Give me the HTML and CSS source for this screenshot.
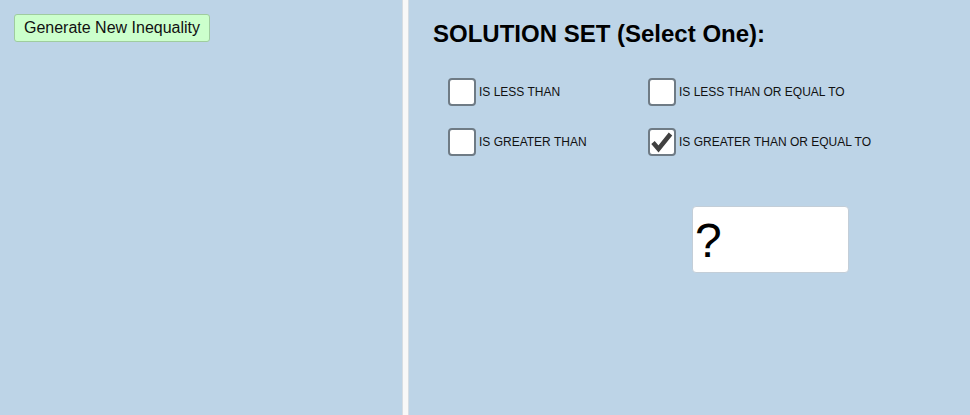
FILE: index.html
```html
<!DOCTYPE html>
<html>
<head>
<meta charset="utf-8">
<link rel="stylesheet" href="styles.css">
</head>
<body>
<div class="app">
  <div class="left">
    <button class="gen-btn">Generate New Inequality</button>
  </div>
  <div class="divider"></div>
  <div class="right">
    <h1 class="title">SOLUTION SET (Select One):</h1>
    <div class="options">
      <label class="opt"><span class="box"></span><span class="lbl">IS LESS THAN</span></label>
      <label class="opt"><span class="box"></span><span class="lbl">IS LESS THAN OR EQUAL TO</span></label>
      <label class="opt"><span class="box"></span><span class="lbl">IS GREATER THAN</span></label>
      <label class="opt"><span class="box checked"><svg width="24" height="24" viewBox="0 0 24 24"><polyline points="3,12.5 8.5,19 20.5,4" fill="none" stroke="#404040" stroke-width="4.5" stroke-linejoin="miter"/></svg></span><span class="lbl">IS GREATER THAN OR EQUAL TO</span></label>
    </div>
    <div class="answer">?</div>
  </div>
</div>
</body>
</html>
```
FILE: styles.css
```css
html, body {
  margin: 0;
  padding: 0;
  background: #bdd4e7;
  font-family: "Liberation Sans", Arial, sans-serif;
}
.app {
  display: flex;
  width: 970px;
  height: 415px;
}
.left {
  width: 402px;
  padding: 14px 0 0 14px;
  box-sizing: border-box;
}
.gen-btn {
  width: 196px;
  height: 28px;
  padding: 0;
  background: #ccffcc;
  border: 1px solid #9fcc9f;
  border-radius: 3px;
  font-family: "Liberation Sans", Arial, sans-serif;
  font-size: 16px;
  color: #111;
}
.divider {
  width: 5px;
  background: #f8f8f8;
  border-left: 1px solid #d6dde3;
  border-right: 1px solid #d6dde3;
}
.right {
  flex: 1;
  padding: 20px 0 0 24px;
}
.title {
  margin: 0;
  font-size: 24px;
  line-height: 28px;
  font-weight: bold;
  color: #000;
}
.options {
  margin: 30px 0 0 15px;
  display: grid;
  grid-template-columns: 200px 280px;
  row-gap: 22px;
}
.opt {
  display: flex;
  align-items: center;
  gap: 3px;
}
.box {
  width: 24px;
  height: 24px;
  background: #fff;
  border: 2px solid #6f7b85;
  border-radius: 4px;
  display: flex;
  align-items: center;
  justify-content: center;
}
.lbl {
  font-size: 12px;
  color: #111;
  white-space: nowrap;
}
.answer {
  margin: 50px 0 0 259px;
  width: 153px;
  height: 65px;
  background: #fff;
  border: 1px solid #c3ced8;
  border-radius: 4px;
  font-size: 48px;
  line-height: 67px;
  padding-left: 2px;
  color: #000;
}
```
